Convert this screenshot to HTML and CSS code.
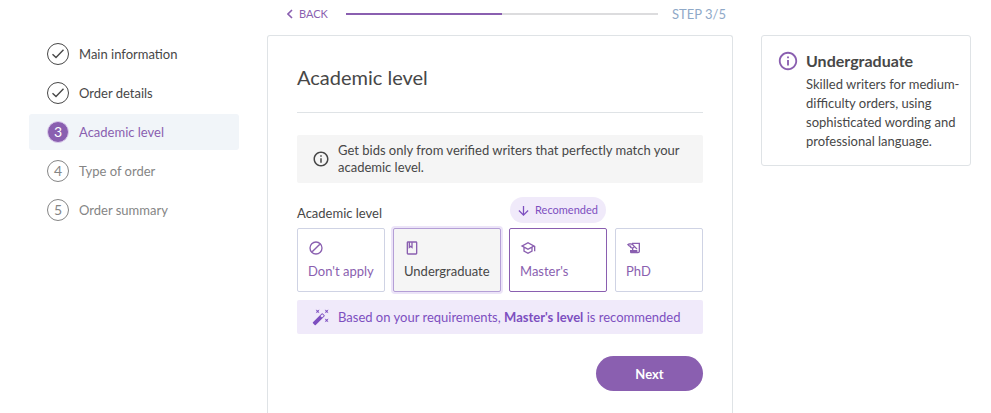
FILE: index.html
```html
<!DOCTYPE html>
<html lang="en">
<head>
<meta charset="utf-8">
<meta name="viewport" content="width=device-width, initial-scale=1">
<title>Academic level</title>
<link rel="stylesheet" href="styles.css">
</head>
<body>
<div class="page">
  <nav class="steps" aria-label="Order steps">
    <ol class="steps-list">
      <li><a class="step step-done" href="#main"><span class="step-mark"><svg class="check" viewBox="0 0 14 12"><path d="M1.5 6.2 5 9.5 12.5 1.8"/></svg></span>Main information</a></li>
      <li><a class="step step-done" href="#details"><span class="step-mark"><svg class="check" viewBox="0 0 14 12"><path d="M1.5 6.2 5 9.5 12.5 1.8"/></svg></span>Order details</a></li>
      <li><a class="step step-current" href="#level" aria-current="step"><span class="step-mark">3</span>Academic level</a></li>
      <li><a class="step" href="#type"><span class="step-mark">4</span>Type of order</a></li>
      <li><a class="step" href="#summary"><span class="step-mark">5</span>Order summary</a></li>
    </ol>
  </nav>

  <main class="main">
    <header class="progress-row">
      <a class="back" href="#back"><svg class="chevron" viewBox="0 0 6 10"><path d="M5 1 1 5l4 4"/></svg>BACK</a>
      <div class="track"><div class="track-fill"></div></div>
      <span class="step-count">STEP 3/5</span>
    </header>

    <form class="card">
      <h1 class="title">Academic level</h1>

      <p class="notice">
        <svg class="icon-notice" viewBox="0 0 24 24"><path d="M11 7h2v2h-2zm0 4h2v6h-2zm1-9C6.48 2 2 6.48 2 12s4.480 10 10 10 10-4.480 10-10S17.520 2 12 2zm0 18c-4.410 0-8-3.590-8-8s3.590-8 8-8 8 3.590 8 8-3.590 8-8 8z"/></svg>
        <span>Get bids only from verified writers that perfectly match your academic level.</span>
      </p>

      <fieldset class="levels">
        <legend class="levels-label">Academic level</legend>
        <div class="options">
          <label class="option">
            <input class="option-input" type="radio" name="level">
            <svg class="icon" viewBox="0 0 24 24"><path d="M12 2a10 10 0 1 0 0 20 10 10 0 0 0 0-20zm0 2a8 8 0 1 1 0 16 8 8 0 0 1 0-16z" fill-rule="evenodd"/><path d="m17 5.500 1.500 1.500L7 18.500 5.500 17z"/></svg>
            <span>Don't apply</span>
          </label>
          <label class="option">
            <input class="option-input" type="radio" name="level" checked>
            <svg class="icon" viewBox="0 0 24 24"><path d="M18 2H6c-1.100 0-2 .9-2 2v16c0 1.100.9 2 2 2h12c1.100 0 2-.9 2-2V4c0-1.100-.9-2-2-2zM9 4h2v5l-1-.75L9 9V4zm9 16H6V4h1v9l3-2.250L13 13V4h5v16z"/></svg>
            <span>Undergraduate</span>
          </label>
          <label class="option option-recommended">
            <input class="option-input" type="radio" name="level">
            <span class="badge"><svg class="arrow" viewBox="0 0 12 12"><path d="M6 1v10M1 6l5 5 5-5"/></svg>Recomended</span>
            <svg class="icon" viewBox="0 0 24 24"><path d="M12 3 1 9l4 2.180v6L12 21l7-3.820v-6l2-1.090V17h2V9L12 3zm6.820 6L12 12.720 5.180 9 12 5.280 18.820 9zM17 15.990l-5 2.730-5-2.730v-3.720L12 15l5-2.730v3.720z"/></svg>
            <span>Master's</span>
          </label>
          <label class="option">
            <input class="option-input" type="radio" name="level">
            <svg class="icon" viewBox="0 0 24 24"><path d="M9 4v1.380c-.83-.33-1.720-.5-2.610-.5-1.790 0-3.580.68-4.950 2.050l3.330 3.330h1.110v1.110c.86.86 1.980 1.310 3.110 1.360V15H6v3c0 1.100.9 2 2 2h10c1.660 0 3-1.340 3-3V4H9zm-1.110 6.410V8.260H5.610L4.570 7.220a5.070 5.070 0 0 1 1.820-.34c1.340 0 2.590.52 3.540 1.460l1.410 1.410-.2.200a2.700 2.700 0 0 1-1.920.8c-.47 0-.93-.12-1.330-.34zM19 17c0 .55-.45 1-1 1s-1-.45-1-1v-2h-6v-2.590c.57-.23 1.100-.57 1.560-1.030l.2-.2L15.590 14H17v-1.410l-6-5.970V6h8v11z"/></svg>
            <span>PhD</span>
          </label>
        </div>
      </fieldset>

      <p class="hint">
        <svg class="icon-hint" viewBox="0 0 24 24"><path d="M7.500 5.600 10 7 8.600 4.500 10 2 7.500 3.400 5 2l1.400 2.500L5 7zm12 9.800L17 14l1.400 2.500L17 19l2.500-1.400L22 19l-1.400-2.500L22 14zM22 2l-2.500 1.400L17 2l1.400 2.500L17 7l2.500-1.400L22 7l-1.400-2.500zm-7.630 5.290a1 1 0 0 0-1.410 0L1.290 18.960a1 1 0 0 0 0 1.410l2.340 2.340c.39.39 1.020.39 1.410 0L16.700 11.050a1 1 0 0 0 0-1.410l-2.330-2.350zm-1.030 5.490-2.120-2.120 2.440-2.440 2.120 2.120-2.440 2.440z"/></svg>
        <span>Based on your requirements, <b>Master's level</b> is recommended</span>
      </p>

      <button class="next" type="button">Next</button>
    </form>
  </main>

  <aside class="info">
    <svg class="icon-info" viewBox="0 0 24 24"><path d="M11 7h2v2h-2zm0 4h2v6h-2zm1-9C6.480 2 2 6.480 2 12s4.480 10 10 10 10-4.480 10-10S17.520 2 12 2zm0 18c-4.410 0-8-3.590-8-8s3.590-8 8-8 8 3.590 8 8-3.590 8-8 8z"/></svg>
    <div>
      <h2 class="info-title">Undergraduate</h2>
      <p class="info-text">Skilled writers for medium-difficulty orders, using sophisticated wording and professional language.</p>
    </div>
  </aside>
</div>
</body>
</html>
```
FILE: styles.css
```css
* {
  box-sizing: border-box;
}

:root {
  --purple: #8a5fb0;
  --violet: #7d4fc0;
  --lavender: #f0eafa;
  --text: #474747;
  --line: #dfe3e6;
}

body {
  margin: 0;
  background: #fff;
  color: var(--text);
  font: 13px/18px Lato, "Liberation Sans", sans-serif;
}

h1, h2, p, ol {
  margin: 0;
  padding: 0;
}

a {
  color: inherit;
  text-decoration: none;
}

svg {
  display: block;
  flex: none;
  fill: currentColor;
}

.page {
  display: grid;
  grid-template-columns: 210fr 466fr 210fr;
  gap: 28px;
  min-height: 100vh;
  padding: 0 20px 0 29px;
}

.steps {
  padding-top: 36px;
}

.steps-list {
  display: grid;
  gap: 3px;
  list-style: none;
}

.step {
  display: flex;
  align-items: center;
  gap: 10px;
  height: 36px;
  padding: 0 18px;
  border-radius: 3px;
  color: #858585;
}

.step-done {
  color: var(--text);
}

.step-current {
  background: #f1f5f9;
  color: var(--purple);
}

.step-mark {
  display: flex;
  align-items: center;
  justify-content: center;
  width: 22px;
  height: 22px;
  border: 1px solid currentColor;
  border-radius: 50%;
  font-size: 14px;
}

.step-current .step-mark {
  border-color: #dccdec;
  background: var(--purple);
  color: #fff;
}

.check {
  width: 14px;
  height: 12px;
}

.check,
.chevron,
.arrow {
  fill: none;
  stroke: currentColor;
  stroke-width: 1.4;
}

.main {
  display: flex;
  flex-direction: column;
}

.progress-row {
  display: flex;
  align-items: center;
  height: 35px;
  padding: 0 7px 8px 20px;
}

.back {
  display: flex;
  align-items: center;
  gap: 6px;
  color: var(--purple);
  font-size: 11px;
}

.chevron {
  width: 6px;
  height: 10px;
  stroke-width: 1.6;
}

.track {
  flex: 1;
  height: 2px;
  margin: 0 14px 0 18px;
  background: #dcdcde;
}

.track-fill {
  width: 50%;
  height: 100%;
  background: var(--purple);
}

.step-count {
  color: #8fa9c8;
}

.card {
  flex: 1;
  padding: 27px 29px 22px;
  border: 1px solid var(--line);
  border-bottom: 0;
  border-radius: 3px 3px 0 0;
}

.title {
  padding-bottom: 21px;
  border-bottom: 1px solid var(--line);
  font-size: 20px;
  font-weight: 400;
  line-height: 28px;
}

.notice,
.hint {
  display: flex;
  align-items: center;
  gap: 8px;
  padding: 7px 8px 7px 15px;
  border-radius: 2px;
}

.notice {
  margin-top: 22px;
  background: #f5f5f5;
  line-height: 17px;
}

.icon-notice,
.icon-hint {
  width: 18px;
  height: 18px;
}

.levels {
  min-width: 0;
  margin: 21px 0 0;
  padding: 0;
  border: 0;
}

.levels-label {
  padding: 0 0 6px;
}

.options {
  display: grid;
  grid-template-columns: 88fr 108fr 98fr 88fr;
  gap: 8px;
}

.option {
  position: relative;
  display: flex;
  flex-direction: column;
  gap: 6px;
  height: 64px;
  padding: 11px 10px;
  border: 1px solid #cfd3e4;
  border-radius: 2px;
  color: var(--purple);
  cursor: pointer;
}

.option:has(:checked) {
  border-color: #b49fd6;
  background: #f5f5f5;
  box-shadow: 0 0 0 2px #ece4f8;
  color: var(--text);
}

.option-recommended {
  border-color: var(--purple);
}

.option-input {
  position: absolute;
  inset: 0;
  width: 100%;
  height: 100%;
  margin: 0;
  opacity: 0;
  cursor: pointer;
}

.icon {
  width: 16px;
  height: 16px;
  color: var(--purple);
}

.badge {
  position: absolute;
  right: 0;
  bottom: 100%;
  left: 0;
  display: flex;
  align-items: center;
  justify-content: center;
  gap: 6px;
  height: 26px;
  margin-bottom: 6px;
  border-radius: 13px;
  background: var(--lavender);
  color: var(--violet);
  font-size: 11px;
}

.arrow {
  width: 11px;
  height: 11px;
}

.hint {
  min-height: 34px;
  margin-top: 8px;
  background: var(--lavender);
  color: var(--violet);
}

.next {
  display: block;
  width: 107px;
  height: 35px;
  margin: 22px 0 0 auto;
  border: 0;
  border-radius: 18px;
  background: var(--purple);
  color: #fff;
  font: 700 13px/18px Lato, "Liberation Sans", sans-serif;
  cursor: pointer;
}

.info {
  display: flex;
  align-self: start;
  gap: 7px;
  margin-top: 35px;
  padding: 14px 8px 14px 15px;
  border: 1px solid var(--line);
  border-radius: 3px;
}

.icon-info {
  width: 22px;
  height: 22px;
  color: var(--purple);
}

.info-title {
  font-size: 16px;
  font-weight: 700;
  line-height: 22px;
}

.info-text {
  margin-top: 3px;
  line-height: 19px;
}
```
